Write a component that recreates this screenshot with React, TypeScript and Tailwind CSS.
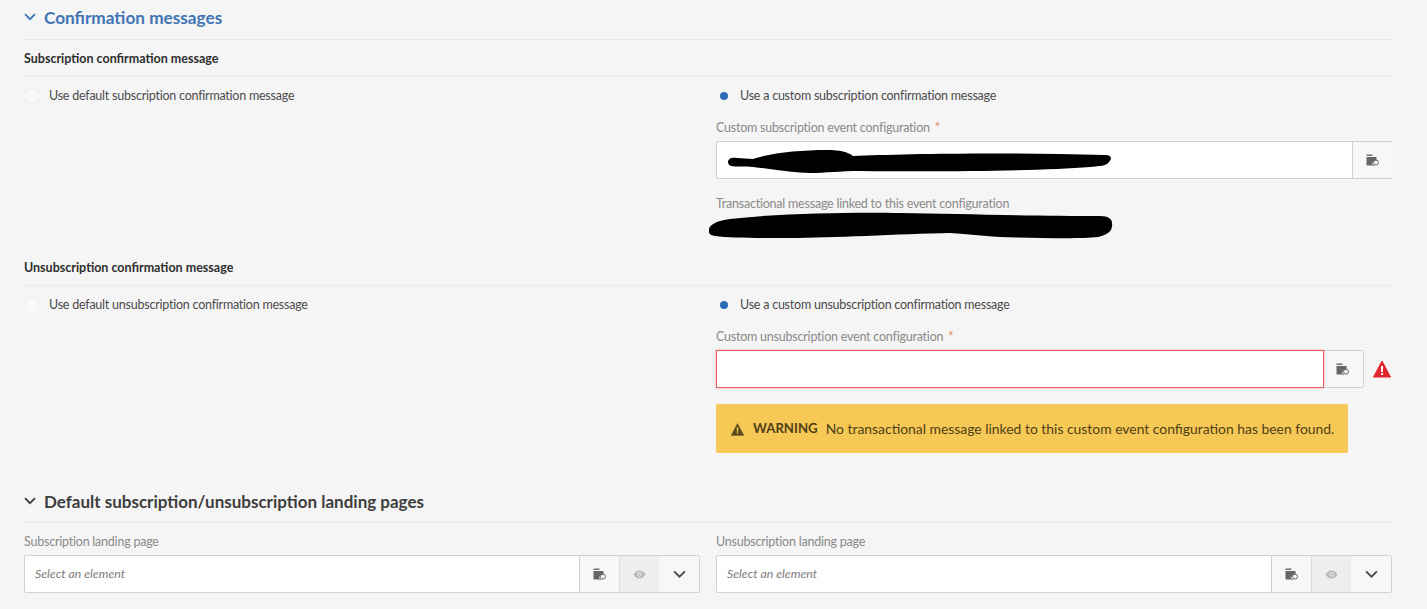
import React from "react";

const FolderSearch = () => (
  <svg width="14" height="13" viewBox="0 0 14 13" fill="none">
    <rect x="0.5" y="0.5" width="6" height="1.4" fill="#666666" />
    <path d="M0.5 3h10v3.2a3.6 3.6 0 0 0-3.7 5.3H0.5z" fill="#666666" />
    <circle cx="10" cy="8.6" r="2.5" stroke="#666666" strokeWidth="1" />
    <path d="M8.2 10.6L6.8 12.2" stroke="#666666" strokeWidth="1" />
  </svg>
);

const Eye = () => (
  <svg width="13" height="9" viewBox="0 0 13 9">
    <path d="M0.5 4.5C2.2 1.8 4.2 0.5 6.5 0.5s4.3 1.3 6 4c-1.7 2.7-3.7 4-6 4s-4.3-1.3-6-4z" fill="#b8b8b8" />
    <circle cx="6.5" cy="4.5" r="2.3" fill="#eeeeee" />
    <circle cx="6.5" cy="4.5" r="1.3" fill="#b8b8b8" />
  </svg>
);

const Chevron = ({ color, size = 12 }: { color: string; size?: number }) => (
  <svg width={size} height={size * 0.67} viewBox="0 0 12 8" fill="none">
    <path d="M1 1.2L6 6.2L11 1.2" stroke={color} strokeWidth="1.7" />
  </svg>
);

const Alert = ({ size, color, mark }: { size: number; color: string; mark: string }) => (
  <svg width={size} height={size} viewBox="0 0 18 18">
    <path d="M9 1L17.5 17H0.5z" fill={color} stroke={color} strokeLinejoin="round" />
    <rect x="8" y="6" width="2" height="6" fill={mark} />
    <rect x="8" y="13" width="2" height="2" fill={mark} />
  </svg>
);

const Radio = ({ label, checked }: { label: string; checked?: boolean }) => (
  <div className="h-[18px] flex items-center text-[12.5px] tracking-[-0.23px] text-[#4b4b4b]">
    {checked ? (
      <span className="w-[16px] h-[16px] mr-[8px] flex items-center justify-center">
        <span className="w-[8px] h-[8px] rounded-full bg-[#2c6cb5]" />
      </span>
    ) : (
      <span className="w-[16px] h-[16px] mr-[9px] rounded-full bg-[#f9f9f9] border border-[#efefef]" />
    )}
    <span>{label}</span>
  </div>
);

const Label = ({ text, required }: { text: string; required?: boolean }) => (
  <div className="h-[18px] flex items-center text-[12.5px] tracking-[-0.22px] text-[#8a8a8a]">
    <span>{text}</span>
    {required ? <span className="ml-[5px] text-[#e8825a]">*</span> : null}
  </div>
);

const IconBtn = ({ children, cls }: { children: React.ReactNode; cls?: string }) => (
  <div className={"w-[40px] h-full flex items-center justify-center shrink-0 " + (cls ?? "bg-[#f7f7f7] border-l border-[#cfcfcf]")}>
    {children}
  </div>
);

const Picker = () => (
  <div className="h-[38px] flex border border-[#d2d2d2] rounded-[2px] bg-white">
    <div className="flex-1 px-[10px] flex items-center text-[12.3px] italic text-[#7d7d7d]">Select an element</div>
    <IconBtn><FolderSearch /></IconBtn>
    <IconBtn cls="bg-[#eeeeee] border-l border-[#dcdcdc]"><Eye /></IconBtn>
    <IconBtn cls="bg-[#f7f7f7]"><Chevron color="#4b4b4b" size={13} /></IconBtn>
  </div>
);

const SubHeading = ({ text }: { text: string }) => (
  <div className="h-[37px] pt-[3px] flex items-center border-b border-[#e9e9e9] text-[12.5px] font-bold text-[#2f2f2f]">{text}</div>
);

export default function App() {
  return (
    <div className="w-[1427px] h-[609px] overflow-hidden bg-[#f5f5f5] pl-[24px] pr-[35px] font-[Lato,sans-serif]">
      <div className="h-[40px] flex items-center gap-[8px] border-b border-[#e6e6e6] pb-[4px]">
        <Chevron color="#3a75bd" size={12} />
        <h2 className="text-[17.2px] font-bold text-[#3f74b5]">Confirmation messages</h2>
      </div>

      <SubHeading text="Subscription confirmation message" />
      <div className="grid grid-cols-2 gap-x-[16px] pt-[10px] h-[172px]">
        <Radio label="Use default subscription confirmation message" />
        <div>
          <Radio label="Use a custom subscription confirmation message" checked />
          <div className="mt-[14px]"><Label text="Custom subscription event configuration" required /></div>
          <div className="mt-[4px] h-[38px] flex border-y border-l border-[#d0d0d0] bg-white">
            <div className="flex-1 relative">
              <svg width="386" height="25" viewBox="727 148 386 25" className="absolute left-[10px] top-[7px]">
                <path d="M728 161C728 157 733 156 737 157L753 158C770 152 800 149 827 149C840 149 848 151 853 155C900 153 1000 151 1105 154C1112 154 1112 158 1109 161C1107 165 1100 165 1090 166C1040 170 940 171 860 170C840 170 825 172 810 172C795 172 780 169 753 166C745 165 735 166 731 165C729 164 728 163 728 161Z" fill="#000" />
              </svg>
            </div>
            <IconBtn><FolderSearch /></IconBtn>
          </div>
          <div className="mt-[16px]"><Label text="Transactional message linked to this event configuration" /></div>
          <svg width="406" height="29" viewBox="708 211 406 29" className="-mt-[2px] -ml-[8px] block">
            <path d="M709 231C708 225 716 221 730 219C780 213 860 212 900 213C960 214 1040 216 1100 216C1110 216 1113 220 1112 226C1112 232 1106 235 1098 237C1080 239 1040 238 1000 237C980 236 970 234 950 233C900 234 830 238 790 238C760 238 730 238 715 236C710 235 709 234 709 231Z" fill="#000" />
          </svg>
        </div>
      </div>

      <SubHeading text="Unsubscription confirmation message" />
      <div className="grid grid-cols-2 gap-x-[16px] pt-[10px] h-[197px]">
        <Radio label="Use default unsubscription confirmation message" />
        <div>
          <Radio label="Use a custom unsubscription confirmation message" checked />
          <div className="mt-[14px]"><Label text="Custom unsubscription event configuration" required /></div>
          <div className="mt-[4px] flex items-center h-[38px]">
            <div className="w-[648px] h-full flex rounded-[2px] bg-white border border-[#d0d0d0]">
              <div className="flex-1 -m-px relative z-10 border border-[#e2605f] shadow-[0_0_2px_#ee9a9a]" />
              <IconBtn cls="bg-[#f7f7f7]"><FolderSearch /></IconBtn>
            </div>
            <div className="ml-[9px]"><Alert size={18} color="#e0282e" mark="#ffffff" /></div>
          </div>
          <div className="mt-[16px] w-[632px] h-[49px] pt-[1px] rounded-[2px] bg-[#f6c855] flex items-center pl-[15px] text-[13.9px] text-[#4f3f17]">
            <Alert size={13} color="#5a4a1a" mark="#f6c855" />
            <span className="ml-[9px] font-bold text-[13.2px]">WARNING</span>
            <span className="ml-[8px]">No transactional message linked to this custom event configuration has been found.</span>
          </div>
        </div>
      </div>

      <div className="h-[40px] flex items-center gap-[8px] border-b border-[#e6e6e6] pb-[2px]">
        <Chevron color="#3d3d3d" size={12} />
        <h2 className="text-[17px] font-bold text-[#3d3d3d]">Default subscription/unsubscription landing pages</h2>
      </div>
      <div className="grid grid-cols-2 gap-x-[16px] pt-[10px]">
        <div>
          <Label text="Subscription landing page" />
          <div className="mt-[4px]"><Picker /></div>
        </div>
        <div>
          <Label text="Unsubscription landing page" />
          <div className="mt-[4px]"><Picker /></div>
        </div>
      </div>
    </div>
  );
}
